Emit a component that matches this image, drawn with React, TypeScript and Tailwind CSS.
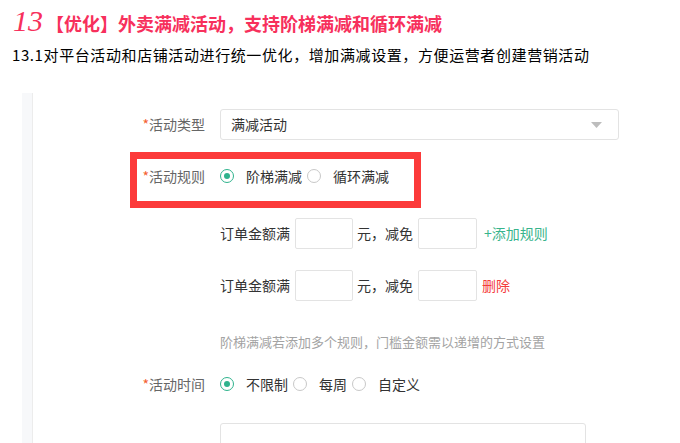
import React from 'react';

const sans = { fontFamily: '"Noto Sans CJK SC", "Noto Sans", sans-serif' };

function Radio({ checked }: { checked?: boolean }) {
  return (
    <span
      className={
        checked
          ? 'flex h-[14px] w-[14px] shrink-0 items-center justify-center rounded-full border border-[#2fb38d]'
          : 'flex h-[14px] w-[14px] shrink-0 items-center justify-center rounded-full border border-[#c8c8c8]'
      }
    >
      {checked && <span className="h-[6px] w-[6px] rounded-full bg-[#2fb38d]" />}
    </span>
  );
}

function RadioGroup({ options }: { options: string[] }) {
  return (
    <div className="flex items-center">
      {options.map((o, i) => (
        <div key={o} className={i === 0 ? 'flex items-center' : 'ml-[5px] flex items-center'}>
          <Radio checked={i === 0} />
          <span className="ml-[12px] text-[14px] text-[#333]">{o}</span>
        </div>
      ))}
    </div>
  );
}

function Label({ text }: { text: string }) {
  return (
    <div className="w-[187px] shrink-0 pr-[15px] text-right text-[14px] text-[#666]">
      <span className="text-[#f4602f]">*</span>
      {text}
    </div>
  );
}

function RuleRow({ last }: { last?: boolean }) {
  return (
    <div className="flex h-[31px] items-center pl-[187px] text-[14px] text-[#333]">
      <span>订单金额满</span>
      <div className="ml-[5px] h-[31px] w-[58px] rounded-[2px] border border-[#e3e3e3]" />
      <span className="ml-[4px]">元，减免</span>
      <div className="ml-[5px] h-[31px] w-[59px] rounded-[2px] border border-[#e3e3e3]" />
      {last ? (
        <span className="ml-[5px] text-[#f43b3b]">删除</span>
      ) : (
        <span className="ml-[7px] text-[#38b48c]">+添加规则</span>
      )}
    </div>
  );
}

export default function App() {
  return (
    <div className="h-[443px] w-[680px] overflow-hidden bg-white">
      <div className="flex items-baseline pl-[13px] pt-[4px] text-[#f7305c]">
        <span className="text-[30px] italic leading-[34px]" style={{ fontFamily: '"Liberation Serif", serif' }}>
          13
        </span>
        <span className="ml-[3px] text-[18px] font-bold leading-[34px]" style={sans}>
          【优化】外卖满减活动，支持阶梯满减和循环满减
        </span>
      </div>
      <div className="mt-[5px] pl-[12px] text-[15px] leading-[20px] tracking-[0.6px] text-black" style={sans}>
        13.1对平台活动和店铺活动进行统一优化，增加满减设置，方便运营者创建营销活动
      </div>

      <div className="mt-[28px] flex" style={sans}>
        <div className="ml-[22px] w-[11px] shrink-0 border-r border-[#ececec] bg-[#f7f8fa]" />
        <div className="flex-1 pt-[16px] pb-[20px]">
          <div className="flex items-center">
            <Label text="活动类型" />
            <div className="flex h-[31px] w-[399px] items-center justify-between rounded-[3px] border border-[#e3e3e3] pl-[10px] pr-[16px]">
              <span className="text-[14px] text-[#333]">满减活动</span>
              <svg width="11" height="6" viewBox="0 0 11 6">
                <path d="M0 0h11L5.5 6z" fill="#bdbdbd" />
              </svg>
            </div>
          </div>

          <div className="relative mt-[20px] flex h-[32px] items-center">
            <Label text="活动规则" />
            <RadioGroup options={['阶梯满减', '循环满减']} />
            <div className="absolute left-[97px] top-[-8px] h-[56px] w-[291px] border-[7px] border-[#fc3a3a]" />
          </div>

          <div className="mt-[26px]">
            <RuleRow />
          </div>
          <div className="mt-[21px]">
            <RuleRow last />
          </div>

          <div className="mt-[31px] pl-[187px] text-[13px] leading-[20px] text-[#a3a3a3]">
            阶梯满减若添加多个规则，门槛金额需以递增的方式设置
          </div>

          <div className="mt-[16px] flex h-[32px] items-center">
            <Label text="活动时间" />
            <RadioGroup options={['不限制', '每周', '自定义']} />
          </div>

          <div className="ml-[187px] mt-[23px] h-[34px] w-[366px] rounded-[3px] border border-[#e3e3e3]" />
        </div>
      </div>
    </div>
  );
}
